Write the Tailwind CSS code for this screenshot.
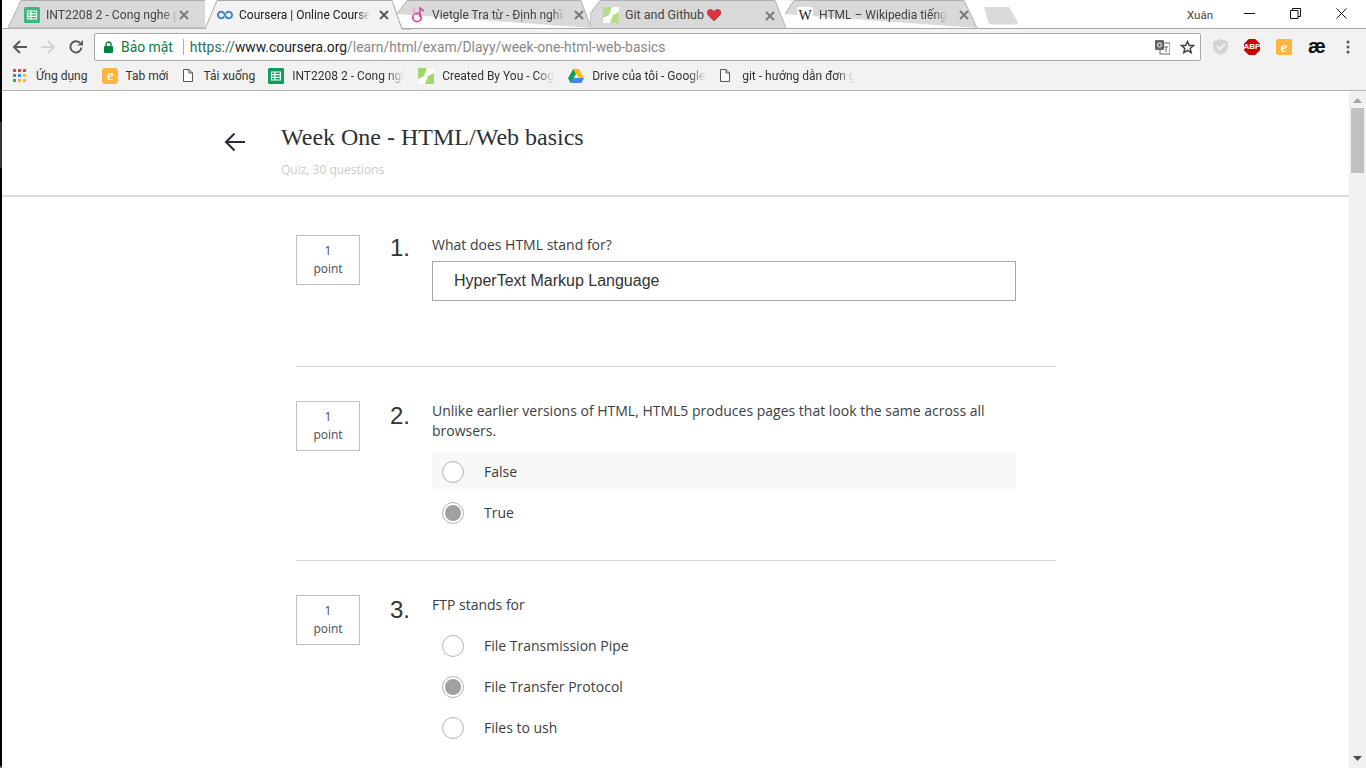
<!DOCTYPE html>
<html lang="vi">
<head>
  <meta charset="UTF-8">
  <title>Coursera | Online Courses</title>
  <script src="https://cdn.jsdelivr.net/npm/@tailwindcss/browser@4"></script>
</head>
<body class="h-screen overflow-hidden bg-white font-['Open_Sans',sans-serif] text-[#3c4043] relative">
  <!-- window edge -->
  <div class="absolute left-0 top-0 h-full w-[2px] bg-black z-20"></div>
  <div class="absolute left-0 top-[122px] h-[46px] w-[2px] bg-[#333] z-20"></div>
  <div class="absolute left-0 bottom-0 h-[2px] w-[2px] bg-[#666] z-20"></div>

  <header class="h-[91px] bg-[#f2f2f2] border-b border-[#b4b4b4] flex flex-col">
    <!-- tabs -->
    <div class="h-[29px] bg-white border-b border-[#a9a9a9] flex items-stretch pl-[8px] text-[12px] font-['Roboto',sans-serif] text-[#444] relative">
      <div class="relative w-[197px] shrink-0 flex items-center pl-[16px] pr-[16px] pt-[2px]">
        <svg class="absolute inset-0" width="197" height="29"><path d="M0 28L13 .5H198L206 28Z" fill="#d9d9d9" stroke="#b0b0b0"/></svg>
        <svg class="relative w-[16px] h-[16px] shrink-0" viewBox="0 0 16 16"><rect width="16" height="16" rx="1.5" fill="#3cb67d"/><path d="M3.5 4h9v8h-9zM3.5 6.700h9M3.500 9.300h9M7 4v8" fill="none" stroke="#fff" stroke-width="1.2"/></svg>
        <span class="relative ml-[6px] w-[134px] text-[12.2px] overflow-hidden whitespace-nowrap [mask-image:linear-gradient(to_right,#000_88%,transparent)]">INT2208 2 - Cong nghe p</span>
        <svg class="relative ml-[1px] shrink-0 w-[10px] h-[10px]" viewBox="0 0 10 10"><path d="M1 1l8 8M9 1l-8 8" stroke="#777" stroke-width="1.8"/></svg>
      </div>
      <div class="relative w-[192px] shrink-0 flex items-center pl-[12px] pt-[2px] z-10 text-[#222]">
        <svg class="absolute left-0 top-0" width="206" height="30"><path d="M-2 29H0L12 .5H187L197 29H206" fill="#f2f2f2" stroke="#a9a9a9"/></svg>
        <svg class="relative w-[16px] h-[10px] shrink-0" viewBox="0 0 18 10"><path d="M8 3.200A3.700 3.700 0 1 0 8 6.800M10 3.200A3.700 3.700 0 1 1 10 6.800M8 3.200L10 6.800" fill="none" stroke="#3f84c8" stroke-width="2.2"/></svg>
        <span class="relative ml-[6px] w-[131px] overflow-hidden whitespace-nowrap [mask-image:linear-gradient(to_right,#000_90%,transparent)]">Coursera | Online Course</span>
        <svg class="relative ml-[9px] shrink-0 w-[10px] h-[10px]" viewBox="0 0 10 10"><path d="M1 1l8 8M9 1l-8 8" stroke="#555" stroke-width="1.8"/></svg>
      </div>
      <div class="relative w-[193px] shrink-0 flex items-center pl-[14px] pt-[2px]">
        <svg class="absolute left-0 top-0" width="200" height="29"><path d="M0 14L10 .5H184L194 28" fill="#d9d9d9" stroke="#b0b0b0"/></svg>
        <svg class="relative w-[16px] h-[16px] shrink-0" viewBox="0 0 16 16"><circle cx="6" cy="10.500" r="4.200" fill="none" stroke="#e0489b" stroke-width="1.8"/><path d="M9 10V1l4 3" fill="none" stroke="#c8509f" stroke-width="1.6"/><path d="M3 1v7" stroke="#eea0c8" stroke-width="1.4"/></svg>
        <span class="relative ml-[5px] w-[133px] overflow-hidden whitespace-nowrap [mask-image:linear-gradient(to_right,#000_90%,transparent)]">Vietgle Tra từ - Định nghĩa</span>
        <svg class="relative ml-[9px] shrink-0 w-[10px] h-[10px]" viewBox="0 0 10 10"><path d="M1 1l8 8M9 1l-8 8" stroke="#777" stroke-width="1.8"/></svg>
      </div>
      <div class="relative w-[195px] shrink-0 flex items-center pl-[13px] pt-[2px]">
        <svg class="absolute left-0 top-0" width="200" height="29"><path d="M0 28V14L10 .5H185L196 28" fill="#d9d9d9" stroke="#b0b0b0"/></svg>
        <svg class="relative w-[16px] h-[16px] shrink-0" viewBox="0 0 16 16"><rect width="16" height="16" fill="#b4de87"/><path d="M9 0H16V5L10 8H6ZM0 11L6 8H10L7 16H0Z" fill="#fff"/></svg>
        <span class="relative ml-[6px] text-[12.5px] whitespace-nowrap">Git and Github</span>
        <svg class="relative ml-[3px] shrink-0" width="14" height="12" viewBox="0 0 14 12"><path d="M7 12L1 6Q-1 3 1.500 1T7 2.500Q9.500-1 12.500 1T13 6Z" fill="#e0323f" stroke="#8a3a40" stroke-width=".6"/></svg>
        <svg class="absolute left-[175px] top-[11px] w-[10px] h-[10px]" viewBox="0 0 10 10"><path d="M1 1l8 8M9 1l-8 8" stroke="#777" stroke-width="1.8"/></svg>
      </div>
      <div class="relative w-[190px] shrink-0 flex items-center pl-[12px] pt-[2px]">
        <svg class="absolute left-0 top-0" width="200" height="29"><path d="M0 14L9 .5H179L192 28" fill="#d9d9d9" stroke="#b0b0b0"/></svg>
        <span class="relative w-[16px] h-[16px] bg-white rounded-[2px] flex items-center justify-center font-['Liberation_Serif',serif] text-[14px] text-[#222]">W</span>
        <span class="relative ml-[6px] w-[128px] overflow-hidden whitespace-nowrap [mask-image:linear-gradient(to_right,#000_90%,transparent)]">HTML – Wikipedia tiếng</span>
        <svg class="relative ml-[12px] shrink-0 w-[10px] h-[10px]" viewBox="0 0 10 10"><path d="M1 1l8 8M9 1l-8 8" stroke="#777" stroke-width="1.8"/></svg>
      </div>
      <svg class="ml-[8px] mt-[7px] shrink-0" width="36" height="18"><path d="M1.500 .5H26L34.500 15.500Q35 17 33 17H8Q6.500 17 6 16Z" fill="#d9d9d9" stroke="#ddd"/></svg>
      <div class="ml-auto flex items-start pr-[2px]">
        <span class="mt-[8px] mr-[14px] text-[11.5px] leading-[14px] text-[#444]">Xuân</span>
        <div class="w-[45px] h-[28px] flex items-center justify-center pb-[2px]"><svg width="11" height="11"><path d="M0 5.500H11" stroke="#111"/></svg></div>
        <div class="w-[46px] h-[28px] flex items-center justify-center pb-[2px]"><svg width="11" height="11"><path d="M.5 2.500h7.500v8h-7.500zM2.500 2.500v-2h8v8h-2.500" fill="none" stroke="#111"/></svg></div>
        <div class="w-[46px] h-[28px] flex items-center justify-center pb-[2px]"><svg width="11" height="11"><path d="M.5 .5l10 10M10.500 .5l-10 10" stroke="#111"/></svg></div>
      </div>
    </div>

    <!-- toolbar -->
    <div class="h-[34px] flex items-center pt-[2px] pl-[12px] pr-[12px]">
      <svg class="shrink-0" width="16" height="16" viewBox="0 0 16 16"><path d="M15 8H2M8 2L2 8l6 6" fill="none" stroke="#5a5a5a" stroke-width="2"/></svg>
      <svg class="ml-[12px] shrink-0" width="16" height="16" viewBox="0 0 16 16"><path d="M1 8h13M8 2l6 6-6 6" fill="none" stroke="#d2d2d2" stroke-width="2"/></svg>
      <svg class="ml-[12px] shrink-0" width="16" height="16" viewBox="0 0 16 16"><path d="M13.500 8.500A5.600 5.600 0 1 1 11.800 3.800" fill="none" stroke="#5a5a5a" stroke-width="2"/><path d="M9.500 6.500H15V1Z" fill="#5a5a5a"/></svg>
      <div class="ml-[10px] w-[1107px] h-[28px] bg-white border border-[#a9a9a9] rounded-[2px] flex items-center pl-[9px] pr-[5px] text-[13.9px] font-['Roboto',sans-serif] shrink-0">
        <svg class="shrink-0" width="9" height="12" viewBox="0 0 9 12"><path d="M2 5V3.500a2.500 2.500 0 0 1 5 0V5" fill="none" stroke="#0b8043" stroke-width="1.400"/><rect y="5" width="9" height="7" rx="1" fill="#0b8043"/></svg>
        <span class="ml-[8px] text-[#0b8043]">Bảo mật</span>
        <span class="ml-[10px] w-px h-[16px] bg-[#b0b0b0]"></span>
        <span class="ml-[6px] text-[#888] whitespace-nowrap"><span class="text-[#2f6f5a]">https://</span><span class="text-[#222]">www.coursera.org</span>/learn/html/exam/Dlayy/week-one-html-web-basics</span>
        <svg class="ml-auto shrink-0" width="15" height="15" viewBox="0 0 15 15"><rect x="5" y="3" width="10" height="11" fill="#fff" stroke="#666"/><rect width="9" height="10" rx="1" fill="#666"/><circle cx="4.500" cy="5" r="2" fill="none" stroke="#fff"/><path d="M9 7h4M11 7v5" stroke="#666"/></svg>
        <svg class="ml-[10px] shrink-0" width="15" height="15" viewBox="0 0 15 15"><path d="M7.500 1.500l1.800 4h4.200l-3.300 2.900 1 4.300-3.700-2.300-3.700 2.300 1-4.300L1.500 5.500h4.200z" fill="none" stroke="#444" stroke-width="1.500"/></svg>
      </div>
      <svg class="ml-[12px] shrink-0" width="15" height="16" viewBox="0 0 15 16"><path d="M7.500 0L15 2.500V8q0 5-7.500 8Q0 13 0 8V2.500Z" fill="#d3d3d3"/><path d="M4 7l3 3 5-5" fill="none" stroke="#f2f2f2" stroke-width="2"/></svg>
      <div class="ml-[16px] w-[16px] h-[16px] [clip-path:polygon(30%_0,70%_0,100%_30%,100%_70%,70%_100%,30%_100%,0_70%,0_30%)] bg-[#c00] text-white text-[8px] font-bold font-['Liberation_Sans',sans-serif] flex items-center justify-center shrink-0">ABP</div>
      <div class="ml-[16px] w-[16px] h-[16px] rounded-[2px] bg-[#fdb53f] text-white text-[15px] italic font-bold font-['Liberation_Serif',serif] leading-none flex items-center justify-center shrink-0">e</div>
      <div class="ml-[16px] w-[18px] text-center text-[#111] text-[20px] font-bold leading-none font-['Liberation_Sans',sans-serif] shrink-0 pb-[3px]">æ</div>
      <svg class="ml-[20px] shrink-0" width="4" height="14"><circle cx="2" cy="2" r="1.500" fill="#555"/><circle cx="2" cy="7" r="1.500" fill="#555"/><circle cx="2" cy="12" r="1.500" fill="#555"/></svg>
    </div>

    <!-- bookmarks -->
    <div class="h-[27px] flex items-center pb-[2px] pl-[13px] text-[12px] font-['Roboto',sans-serif] text-[#333] whitespace-nowrap">
      <svg class="shrink-0" width="13" height="13"><g fill="#ea4335"><rect width="3" height="3"/><rect x="5" width="3" height="3"/><rect x="10" width="3" height="3"/></g><rect y="5" width="3" height="3" fill="#34a853"/><rect x="5" y="5" width="3" height="3" fill="#4285f4"/><rect x="10" y="5" width="3" height="3" fill="#fbbc05"/><rect y="10" width="3" height="3" fill="#34a853"/><rect x="5" y="10" width="3" height="3" fill="#fbbc05"/><rect x="10" y="10" width="3" height="3" fill="#fbbc05"/></svg>
      <span class="ml-[10px]">Ứng dụng</span>
      <span class="ml-[15px] w-[16px] h-[16px] rounded-[3px] bg-[#fdb53f] text-white text-[15px] italic font-bold font-['Liberation_Serif',serif] leading-none flex items-center justify-center shrink-0">e</span>
      <span class="ml-[7px]">Tab mới</span>
      <svg class="ml-[15px] shrink-0" width="10" height="13" viewBox="0 0 10 13"><path d="M.5 .5H6L9.500 4V12.500H.5ZM6 .5V4H9.500" fill="#fff" stroke="#555"/></svg>
      <span class="ml-[10px]">Tải xuống</span>
      <svg class="ml-[13px] shrink-0" width="16" height="16" viewBox="0 0 16 16"><rect width="16" height="16" rx="1" fill="#0f9d58"/><path d="M3.500 4h9v8h-9zM3.500 6.700h9M3.500 9.300h9M7 4v8" fill="none" stroke="#fff" stroke-width="1.200"/></svg>
      <span class="ml-[8px] w-[112px] overflow-hidden [mask-image:linear-gradient(to_right,#000_85%,transparent)]">INT2208 2 - Cong nghe</span>
      <svg class="ml-[14px] shrink-0" width="16" height="16" viewBox="0 0 16 16"><rect width="16" height="16" fill="#a3d76b"/><path d="M9 0H16V5L10 8H6ZM0 11L6 8H10L7 16H0Z" fill="#fff"/></svg>
      <span class="ml-[8px] w-[112px] overflow-hidden [mask-image:linear-gradient(to_right,#000_85%,transparent)]">Created By You - Cog</span>
      <svg class="ml-[14px] shrink-0" width="16" height="14" viewBox="0 0 16 14"><path d="M5.300 0H10.700L16 9H10.700Z" fill="#fbbc05"/><path d="M5.300 0L0 9.300 2.700 14 8 5Z" fill="#0f9d58"/><path d="M2.700 14H13.300L16 9H5.400Z" fill="#4285f4"/></svg>
      <span class="ml-[8px] w-[114px] overflow-hidden [mask-image:linear-gradient(to_right,#000_85%,transparent)]">Drive của tôi - Google</span>
      <svg class="ml-[14px] shrink-0" width="10" height="13" viewBox="0 0 10 13"><path d="M.5 .5H6L9.500 4V12.500H.5ZM6 .5V4H9.500" fill="#fff" stroke="#555"/></svg>
      <span class="ml-[12px] w-[112px] overflow-hidden [mask-image:linear-gradient(to_right,#000_85%,transparent)]">git - hướng dẫn đơn giản</span>
    </div>
  </header>

  <div class="flex h-[677px]">
    <main class="flex-1 pl-[2px]">
      <div class="h-[106px] border-b-2 border-[#dcdcdc] pl-[222px] flex">
        <svg class="mt-[41px] shrink-0" width="22" height="20" viewBox="0 0 22 20"><path d="M21 10H2M10.500 1.500L2 10l8.500 8.500" fill="none" stroke="#2a2a35" stroke-width="2"/></svg>
        <div class="ml-[35px] pt-[30px]">
          <h1 class="text-[24px] leading-[32px] text-[#2f2f38] font-['Liberation_Serif',serif]">Week One - HTML/Web basics</h1>
          <p class="mt-[9px] text-[12px] leading-[16px] text-[#ccc]">Quiz, 30 questions</p>
        </div>
      </div>

      <div class="ml-[294px] w-[760px]">
        <section class="h-[170px] border-b border-[#d4d4d4] pt-[38px] flex">
          <div class="w-[64px] h-[50px] border border-[#c0c0c0] text-[12px] leading-[18px] text-center pt-[6px] text-[#4a4a55] shrink-0">1<br>point</div>
          <div class="w-[30px] ml-[30px] text-[24px] leading-[26px] font-['Liberation_Sans',sans-serif] text-[#333] shrink-0">1.</div>
          <div class="ml-[12px] w-[584px]">
            <p class="text-[14px] leading-[20px]">What does HTML stand for?</p>
            <div class="mt-[6px] h-[40px] border border-[#aaa] pl-[21px] flex items-center text-[16px] font-['Liberation_Sans',sans-serif] text-[#333]">HyperText Markup Language</div>
          </div>
        </section>

        <section class="h-[194px] border-b border-[#d4d4d4] pt-[34px] flex">
          <div class="w-[64px] h-[50px] border border-[#c0c0c0] text-[12px] leading-[18px] text-center pt-[6px] text-[#4a4a55] shrink-0">1<br>point</div>
          <div class="w-[30px] ml-[30px] mt-[2px] text-[24px] leading-[26px] font-['Liberation_Sans',sans-serif] text-[#333] shrink-0">2.</div>
          <div class="ml-[12px] w-[584px]">
            <p class="text-[14px] leading-[20px]">Unlike earlier versions of HTML, HTML5 produces pages that look the same across all browsers.</p>
            <div class="mt-[12px] h-[36px] bg-[#f8f8f8] rounded-[2px] flex items-center pl-[10px] text-[14px]">
              <span class="mt-[2px] w-[22px] h-[22px] rounded-full border border-[#b5b5b5] bg-white shrink-0"></span><span class="ml-[20px]">False</span>
            </div>
            <div class="mt-[5px] h-[36px] flex items-center pl-[10px] text-[14px]">
              <span class="mt-[2px] w-[22px] h-[22px] rounded-full border border-[#b5b5b5] bg-white flex items-center justify-center shrink-0"><span class="w-[16px] h-[16px] rounded-full bg-[#a0a0a0]"></span></span><span class="ml-[20px]">True</span>
            </div>
          </div>
        </section>

        <section class="pt-[34px] flex">
          <div class="w-[64px] h-[50px] border border-[#c0c0c0] text-[12px] leading-[18px] text-center pt-[6px] text-[#4a4a55] shrink-0">1<br>point</div>
          <div class="w-[30px] ml-[30px] mt-[2px] text-[24px] leading-[26px] font-['Liberation_Sans',sans-serif] text-[#333] shrink-0">3.</div>
          <div class="ml-[12px] w-[584px]">
            <p class="text-[14px] leading-[20px]">FTP stands for</p>
            <div class="mt-[12px] h-[36px] flex items-center pl-[10px] text-[14px]">
              <span class="mt-[2px] w-[22px] h-[22px] rounded-full border border-[#b5b5b5] bg-white shrink-0"></span><span class="ml-[20px]">File Transmission Pipe</span>
            </div>
            <div class="mt-[5px] h-[36px] flex items-center pl-[10px] text-[14px]">
              <span class="mt-[2px] w-[22px] h-[22px] rounded-full border border-[#b5b5b5] bg-white flex items-center justify-center shrink-0"><span class="w-[16px] h-[16px] rounded-full bg-[#a0a0a0]"></span></span><span class="ml-[20px]">File Transfer Protocol</span>
            </div>
            <div class="mt-[5px] h-[36px] flex items-center pl-[10px] text-[14px]">
              <span class="mt-[2px] w-[22px] h-[22px] rounded-full border border-[#b5b5b5] bg-white shrink-0"></span><span class="ml-[20px]">Files to ush</span>
            </div>
          </div>
        </section>
      </div>
    </main>

    <!-- scrollbar -->
    <div class="w-[17px] bg-[#f1f1f1] flex flex-col items-center shrink-0">
      <svg class="mt-[7px]" width="9" height="5"><path d="M4.500 0L9 5H0Z" fill="#a3a3a3"/></svg>
      <div class="mt-[5px] w-[13px] h-[65px] bg-[#c1c1c1]"></div>
      <svg class="mt-auto mb-[7px]" width="9" height="5"><path d="M0 0H9L4.500 5Z" fill="#505050"/></svg>
    </div>
  </div>
</body>
</html>
